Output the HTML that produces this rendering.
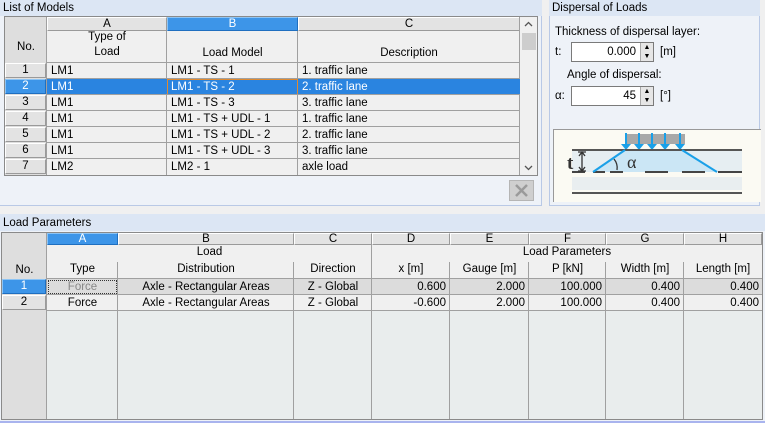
<!DOCTYPE html>
<html><head><style>
*{margin:0;padding:0;box-sizing:border-box}
body{width:765px;height:423px;background:#f0f0f0;position:relative;overflow:hidden;font-family:"Liberation Sans",sans-serif;font-size:11.5px;color:#000}
.a{position:absolute}
.t{position:absolute;white-space:nowrap;line-height:16px}
.hb{position:absolute;background:#e3e3e3;border:1px solid #fff;border-right-color:#9a9a9a;border-bottom-color:#9a9a9a;text-align:center;line-height:13px}
.sel{background:#3d95e8;color:#fff;border-color:#8cc4f5 #1f6fc0 #1f6fc0 #8cc4f5}
.r{text-align:right}.c{text-align:center}
</style></head><body>

<!-- top-left panel -->
<div class="a" style="left:0;top:0;width:542px;height:206px;background:#eef2f8;border-right:1px solid #b9c9e6;border-bottom:1px solid #b9c9e6"></div>
<div class="a" style="left:0;top:0;width:542px;height:16px;background:#dce6f4"></div>
<div class="t" style="left:3px;top:0">List of Models</div>
<div class="a" style="left:4px;top:16px;width:534px;height:160px;background:#f0f0f0;border:1px solid #8a8a8a"></div>
<div class="a" style="left:5px;top:17px;width:42px;height:158px;background:#dedede;border-right:1px solid #a0a0a0"></div>
<div class="t" style="left:5px;top:39px;width:42px;text-align:center">No.</div>
<div class="hb" style="left:47px;top:17px;width:120px;height:14px">A</div>
<div class="hb sel" style="left:167px;top:17px;width:131px;height:14px">B</div>
<div class="hb" style="left:298px;top:17px;width:222px;height:14px">C</div>
<div class="a" style="left:47px;top:31px;width:473px;height:32px;border-bottom:1px solid #a0a0a0"></div>
<div class="t c" style="left:47px;top:30px;width:120px;line-height:15px">Type of<br>Load</div>
<div class="t c" style="left:167px;top:45px;width:131px">Load Model</div>
<div class="t c" style="left:298px;top:45px;width:222px">Description</div>
<div class="a" style="left:166px;top:31px;width:1px;height:144px;background:#a0a0a0"></div>
<div class="a" style="left:297px;top:31px;width:1px;height:144px;background:#a0a0a0"></div>
<div class="a" style="left:519px;top:17px;width:1px;height:158px;background:#a0a0a0"></div>

<div class="hb" style="left:5px;top:63px;width:41px;height:15px">1</div>
<div class="hb sel" style="left:5px;top:79px;width:41px;height:15px">2</div>
<div class="hb" style="left:5px;top:95px;width:41px;height:15px">3</div>
<div class="hb" style="left:5px;top:111px;width:41px;height:15px">4</div>
<div class="hb" style="left:5px;top:127px;width:41px;height:15px">5</div>
<div class="hb" style="left:5px;top:143px;width:41px;height:15px">6</div>
<div class="hb" style="left:5px;top:159px;width:41px;height:15px">7</div>

<div class="a" style="left:47px;top:79px;width:473px;height:16px;background:#2a84e0"></div>
<div class="a" style="left:167px;top:79px;width:131px;height:16px;border:1px solid #e08a30"></div>
<div class="a" style="left:47px;top:78px;width:473px;height:1px;background:#a0a0a0"></div>
<div class="a" style="left:47px;top:94px;width:473px;height:1px;background:#a0a0a0"></div>
<div class="a" style="left:47px;top:110px;width:473px;height:1px;background:#a0a0a0"></div>
<div class="a" style="left:47px;top:126px;width:473px;height:1px;background:#a0a0a0"></div>
<div class="a" style="left:47px;top:142px;width:473px;height:1px;background:#a0a0a0"></div>
<div class="a" style="left:47px;top:158px;width:473px;height:1px;background:#a0a0a0"></div>

<div class="t" style="left:51px;top:63px">LM1</div><div class="t" style="left:171px;top:63px">LM1 - TS - 1</div><div class="t" style="left:302px;top:63px">1. traffic lane</div>
<div class="t" style="left:51px;top:79px;color:#fff">LM1</div><div class="t" style="left:171px;top:79px;color:#fff">LM1 - TS - 2</div><div class="t" style="left:302px;top:79px;color:#fff">2. traffic lane</div>
<div class="t" style="left:51px;top:95px">LM1</div><div class="t" style="left:171px;top:95px">LM1 - TS - 3</div><div class="t" style="left:302px;top:95px">3. traffic lane</div>
<div class="t" style="left:51px;top:111px">LM1</div><div class="t" style="left:171px;top:111px">LM1 - TS + UDL - 1</div><div class="t" style="left:302px;top:111px">1. traffic lane</div>
<div class="t" style="left:51px;top:127px">LM1</div><div class="t" style="left:171px;top:127px">LM1 - TS + UDL - 2</div><div class="t" style="left:302px;top:127px">2. traffic lane</div>
<div class="t" style="left:51px;top:143px">LM1</div><div class="t" style="left:171px;top:143px">LM1 - TS + UDL - 3</div><div class="t" style="left:302px;top:143px">3. traffic lane</div>
<div class="t" style="left:51px;top:159px">LM2</div><div class="t" style="left:171px;top:159px">LM2 - 1</div><div class="t" style="left:302px;top:159px">axle load</div>

<!-- scrollbar -->
<div class="a" style="left:520px;top:17px;width:17px;height:158px;background:#f0f0f0"></div>
<svg class="a" style="left:524px;top:21px" width="9" height="6"><path d="M1 5L4.5 1.5L8 5" stroke="#555" fill="none" stroke-width="1.3"/></svg>
<div class="a" style="left:522px;top:33px;width:14px;height:17px;background:#cdcdcd"></div>
<svg class="a" style="left:524px;top:165px" width="9" height="6"><path d="M1 1L4.5 4.5L8 1" stroke="#555" fill="none" stroke-width="1.3"/></svg>
<!-- button -->
<div class="a" style="left:509px;top:180px;width:25px;height:21px;background:#cfcfcf;border:1px solid #b5b5b5"></div>
<svg class="a" style="left:514px;top:183px" width="15" height="15"><path d="M2 2L13 13M13 2L2 13" stroke="#9a9a9a" stroke-width="2.5"/></svg>

<!-- right panel -->
<div class="a" style="left:549px;top:0;width:211px;height:206px;background:#eef2f8;border:1px solid #b9c9e6;border-top:none"></div>
<div class="a" style="left:549px;top:0;width:211px;height:16px;background:#dce6f4"></div>
<div class="t" style="left:552px;top:0">Dispersal of Loads</div>
<div class="t" style="left:555px;top:24px">Thickness of dispersal layer:</div>
<div class="t" style="left:555px;top:44px">t:</div>
<div class="a" style="left:571px;top:42px;width:83px;height:20px;background:#fff;border:1px solid #7a7a7a"></div>
<div class="t" style="left:574px;top:44px;width:62px;text-align:right">0.000</div>
<div class="a" style="left:640px;top:43px;width:13px;height:18px;background:#e6e6e6;border-left:1px solid #aaa;font-size:7px;line-height:9px;text-align:center">▲<br>▼</div>
<div class="t" style="left:660px;top:44px">[m]</div>
<div class="t" style="left:567px;top:67px">Angle of dispersal:</div>
<div class="t" style="left:555px;top:88px">α:</div>
<div class="a" style="left:571px;top:86px;width:83px;height:20px;background:#fff;border:1px solid #7a7a7a"></div>
<div class="t" style="left:574px;top:88px;width:62px;text-align:right">45</div>
<div class="a" style="left:640px;top:87px;width:13px;height:18px;background:#e6e6e6;border-left:1px solid #aaa;font-size:7px;line-height:9px;text-align:center">▲<br>▼</div>
<div class="t" style="left:660px;top:88px">[°]</div>
<svg class="a" style="left:553px;top:129px" width="208" height="73">
<rect width="208" height="73" fill="#fbfaf3"/>
<rect x="0" y="0" width="1" height="73" fill="#999"/><rect x="0" y="0" width="208" height="1" fill="#999"/>
<rect x="19" y="21" width="170" height="22" fill="#e6eef2"/>
<rect x="19" y="48" width="170" height="13" fill="#e9eef0"/>
<polygon points="40,43 72,21 129,21 164,43" fill="#cbe6f5"/>
<rect x="72" y="5" width="60" height="10" fill="#a8a8a8"/>
<g stroke="#1aa0e8" stroke-width="2" fill="#1aa0e8">
<line x1="73" y1="4" x2="73" y2="16"/><line x1="86" y1="4" x2="86" y2="16"/><line x1="99" y1="4" x2="99" y2="16"/><line x1="112" y1="4" x2="112" y2="16"/><line x1="127" y1="4" x2="127" y2="16"/>
</g>
<g fill="#1aa0e8">
<path d="M68 15L78 15L73 21Z"/><path d="M81 15L91 15L86 21Z"/><path d="M94 15L104 15L99 21Z"/><path d="M107 15L117 15L112 21Z"/><path d="M122 15L132 15L127 21Z"/>
</g>
<line x1="19" y1="21" x2="189" y2="21" stroke="#555" stroke-width="2"/>
<g stroke="#444" stroke-width="2">
<line x1="19" y1="43" x2="32" y2="43"/><line x1="40" y1="43" x2="52" y2="43"/><line x1="57" y1="43" x2="70" y2="43"/><line x1="92" y1="43" x2="115" y2="43"/><line x1="129" y1="43" x2="152" y2="43"/><line x1="165" y1="43" x2="189" y2="43"/>
</g>
<line x1="19" y1="64" x2="189" y2="64" stroke="#555" stroke-width="2"/>
<line x1="40" y1="43" x2="72" y2="21" stroke="#1aa0e8" stroke-width="2"/>
<line x1="129" y1="21" x2="164" y2="43" stroke="#1aa0e8" stroke-width="2"/>
<path d="M29 23L29 42M25 23L33 23M25 42L33 42M26 27L29 23L32 27M26 38L29 42L32 38" stroke="#333" stroke-width="1.3" fill="none"/>
<path d="M61 30Q65 35 64 41" stroke="#333" stroke-width="1.3" fill="none"/>
<text x="14" y="40" font-family="Liberation Serif" font-size="19" font-weight="bold" fill="#333">t</text>
<text x="74" y="39" font-family="Liberation Serif" font-size="18" fill="#333">α</text>
</svg>

<!-- bottom panel -->
<div class="a" style="left:0;top:214px;width:765px;height:209px;background:#eef2f8;border-bottom:2px solid #a9b4ee"></div>
<div class="a" style="left:0;top:214px;width:765px;height:17px;background:#dce6f4"></div>
<div class="t" style="left:3px;top:215px">Load Parameters</div>
<div class="a" style="left:1px;top:232px;width:762px;height:188px;background:#e9eded;border:1px solid #8a8a8a"></div>
<div class="a" style="left:2px;top:233px;width:45px;height:186px;background:#dedede;border-right:1px solid #a0a0a0"></div>
<div class="a" style="left:47px;top:245px;width:715px;height:34px;background:#f0f0f0;border-bottom:1px solid #a0a0a0"></div>
<div class="a" style="left:47px;top:279px;width:715px;height:16px;background:#dcdcdc;border-bottom:1px solid #a0a0a0"></div>
<div class="a" style="left:47px;top:295px;width:715px;height:16px;background:#f0f0f0;border-bottom:1px solid #a0a0a0"></div>
<div class="t" style="left:2px;top:262px;width:45px;text-align:center">No.</div>
<div class="hb sel" style="left:47px;top:233px;width:71px;height:12px;line-height:11px">A</div>
<div class="hb" style="left:118px;top:233px;width:176px;height:12px;line-height:11px">B</div>
<div class="hb" style="left:294px;top:233px;width:78px;height:12px;line-height:11px">C</div>
<div class="hb" style="left:372px;top:233px;width:78px;height:12px;line-height:11px">D</div>
<div class="hb" style="left:450px;top:233px;width:79px;height:12px;line-height:11px">E</div>
<div class="hb" style="left:529px;top:233px;width:77px;height:12px;line-height:11px">F</div>
<div class="hb" style="left:606px;top:233px;width:78px;height:12px;line-height:11px">G</div>
<div class="hb" style="left:684px;top:233px;width:78px;height:12px;line-height:11px">H</div>
<div class="t c" style="left:47px;top:244px;width:325px">Load</div>
<div class="t c" style="left:372px;top:244px;width:390px">Load Parameters</div>
<div class="a" style="left:117px;top:262px;width:1px;height:157px;background:#a0a0a0"></div>
<div class="a" style="left:293px;top:262px;width:1px;height:157px;background:#a0a0a0"></div>
<div class="a" style="left:371px;top:245px;width:1px;height:174px;background:#a0a0a0"></div>
<div class="a" style="left:449px;top:262px;width:1px;height:157px;background:#a0a0a0"></div>
<div class="a" style="left:528px;top:262px;width:1px;height:157px;background:#a0a0a0"></div>
<div class="a" style="left:605px;top:262px;width:1px;height:157px;background:#a0a0a0"></div>
<div class="a" style="left:683px;top:262px;width:1px;height:157px;background:#a0a0a0"></div>
<div class="t c" style="left:47px;top:261px;width:71px">Type</div>
<div class="t c" style="left:118px;top:261px;width:176px">Distribution</div>
<div class="t c" style="left:294px;top:261px;width:78px">Direction</div>
<div class="t c" style="left:372px;top:261px;width:78px">x [m]</div>
<div class="t c" style="left:450px;top:261px;width:79px">Gauge [m]</div>
<div class="t c" style="left:529px;top:261px;width:77px">P [kN]</div>
<div class="t c" style="left:606px;top:261px;width:78px">Width [m]</div>
<div class="t c" style="left:684px;top:261px;width:78px">Length [m]</div>
<div class="hb sel" style="left:2px;top:279px;width:44px;height:15px">1</div>
<div class="hb" style="left:2px;top:295px;width:44px;height:15px">2</div>
<div class="a" style="left:48px;top:280px;width:69px;height:14px;border:1px dotted #333"></div>
<div class="t c" style="left:47px;top:279px;width:71px;color:#888">Force</div>
<div class="t c" style="left:118px;top:279px;width:176px">Axle - Rectangular Areas</div>
<div class="t c" style="left:294px;top:279px;width:78px">Z - Global</div>
<div class="t r" style="left:372px;top:279px;width:74px">0.600</div>
<div class="t r" style="left:450px;top:279px;width:75px">2.000</div>
<div class="t r" style="left:529px;top:279px;width:73px">100.000</div>
<div class="t r" style="left:606px;top:279px;width:74px">0.400</div>
<div class="t r" style="left:684px;top:279px;width:75px">0.400</div>
<div class="t c" style="left:47px;top:295px;width:71px">Force</div>
<div class="t c" style="left:118px;top:295px;width:176px">Axle - Rectangular Areas</div>
<div class="t c" style="left:294px;top:295px;width:78px">Z - Global</div>
<div class="t r" style="left:372px;top:295px;width:74px">-0.600</div>
<div class="t r" style="left:450px;top:295px;width:75px">2.000</div>
<div class="t r" style="left:529px;top:295px;width:73px">100.000</div>
<div class="t r" style="left:606px;top:295px;width:74px">0.400</div>
<div class="t r" style="left:684px;top:295px;width:75px">0.400</div>
</body></html>
